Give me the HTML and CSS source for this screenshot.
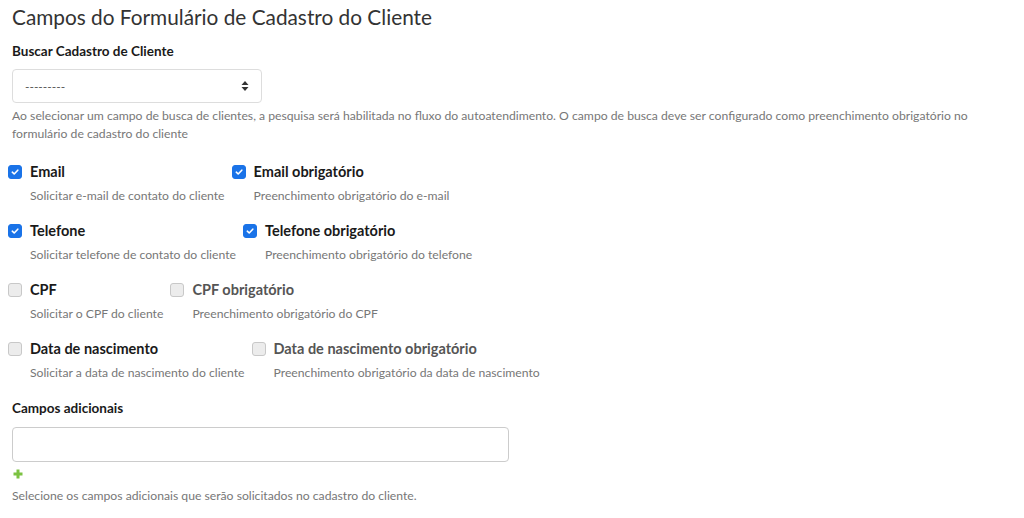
FILE: index.html
```html
<!DOCTYPE html>
<html lang="pt-BR">
<head>
<meta charset="utf-8">
<title>Campos do Formulário de Cadastro do Cliente</title>
<link rel="stylesheet" href="styles.css">
</head>
<body>
<main class="page">
  <h1 class="title">Campos do Formulário de Cadastro do Cliente</h1>

  <section class="field">
    <label class="field-label">Buscar Cadastro de Cliente</label>
    <div class="select">
      <span class="select-value">---------</span>
      <svg class="select-arrows" width="8" height="12" viewBox="0 0 8 12"><path d="M4 1 L7.5 5 H0.5 Z M4 11 L7.5 7 H0.5 Z" fill="#333"/></svg>
    </div>
    <p class="help">Ao selecionar um campo de busca de clientes, a pesquisa será habilitada no fluxo do autoatendimento. O campo de busca deve ser configurado como preenchimento obrigatório no formulário de cadastro do cliente</p>
  </section>

  <div class="checks">
    <div class="check-row">
      <div class="check">
        <span class="box checked"><svg width="10" height="10" viewBox="0 0 10 10"><path d="M2.3 5.2 L4.2 7 L7.8 3.2" fill="none" stroke="#fff" stroke-width="1.6" stroke-linecap="round" stroke-linejoin="round"/></svg></span>
        <div class="check-text"><div class="check-label">Email</div><div class="check-desc">Solicitar e-mail de contato do cliente</div></div>
      </div>
      <div class="check">
        <span class="box checked"><svg width="10" height="10" viewBox="0 0 10 10"><path d="M2.3 5.2 L4.2 7 L7.8 3.2" fill="none" stroke="#fff" stroke-width="1.6" stroke-linecap="round" stroke-linejoin="round"/></svg></span>
        <div class="check-text"><div class="check-label">Email obrigatório</div><div class="check-desc">Preenchimento obrigatório do e-mail</div></div>
      </div>
    </div>
    <div class="check-row">
      <div class="check">
        <span class="box checked"><svg width="10" height="10" viewBox="0 0 10 10"><path d="M2.3 5.2 L4.2 7 L7.8 3.2" fill="none" stroke="#fff" stroke-width="1.6" stroke-linecap="round" stroke-linejoin="round"/></svg></span>
        <div class="check-text"><div class="check-label">Telefone</div><div class="check-desc">Solicitar telefone de contato do cliente</div></div>
      </div>
      <div class="check">
        <span class="box checked"><svg width="10" height="10" viewBox="0 0 10 10"><path d="M2.3 5.2 L4.2 7 L7.8 3.2" fill="none" stroke="#fff" stroke-width="1.6" stroke-linecap="round" stroke-linejoin="round"/></svg></span>
        <div class="check-text"><div class="check-label">Telefone obrigatório</div><div class="check-desc">Preenchimento obrigatório do telefone</div></div>
      </div>
    </div>
    <div class="check-row">
      <div class="check">
        <span class="box"></span>
        <div class="check-text"><div class="check-label">CPF</div><div class="check-desc">Solicitar o CPF do cliente</div></div>
      </div>
      <div class="check">
        <span class="box"></span>
        <div class="check-text"><div class="check-label muted">CPF obrigatório</div><div class="check-desc">Preenchimento obrigatório do CPF</div></div>
      </div>
    </div>
    <div class="check-row">
      <div class="check">
        <span class="box"></span>
        <div class="check-text"><div class="check-label">Data de nascimento</div><div class="check-desc">Solicitar a data de nascimento do cliente</div></div>
      </div>
      <div class="check">
        <span class="box"></span>
        <div class="check-text"><div class="check-label muted">Data de nascimento obrigatório</div><div class="check-desc">Preenchimento obrigatório da data de nascimento</div></div>
      </div>
    </div>
  </div>

  <section class="field extra">
    <label class="field-label">Campos adicionais</label>
    <div class="input"></div>
    <svg class="plus" width="10" height="10" viewBox="0 0 10 10"><path d="M5 0.5 V9.5 M0.5 5 H9.5" stroke="#7cc242" stroke-width="3"/></svg>
    <p class="help">Selecione os campos adicionais que serão solicitados no cadastro do cliente.</p>
  </section>
</main>
</body>
</html>
```

FILE: styles.css
```css
* { box-sizing: border-box; }
body {
  margin: 0;
  background: #fff;
  font-family: Lato, "Open Sans", sans-serif;
  color: #333;
}
.page { padding: 4px 12px 0 12px; }
.title {
  margin: 0;
  font-size: 20.8px;
  font-weight: 400;
  line-height: 26px;
  color: #333;
}
.field { margin-top: 12px; }
.field-label {
  display: block;
  font-size: 13.5px;
  font-weight: 700;
  line-height: 18px;
  color: #1a1a1a;
}
.select {
  margin-top: 9px;
  width: 250px;
  height: 34px;
  border: 1px solid #ddd;
  border-radius: 4px;
  display: flex;
  align-items: center;
  justify-content: space-between;
  padding: 0 12px 0 12px;
  font-size: 12px;
  color: #555;
}
.help {
  margin: 4px 0 0 0;
  font-size: 12.2px;
  line-height: 18px;
  color: #777;
  max-width: 990px;
}
.checks { margin: 19px 0 0 -4px; }
.check-row { display: flex; gap: 7px; margin-bottom: 15px; }
.check { display: flex; gap: 8px; align-items: flex-start; }
.box {
  width: 14px;
  height: 14px;
  margin-top: 3px;
  border-radius: 3px;
  border: 1px solid #c8c8c8;
  background: #ececec;
  display: flex;
  align-items: center;
  justify-content: center;
}
.box.checked { background: #1a73e8; border-color: #1a73e8; }
.check-label {
  font-size: 14.5px;
  font-weight: 700;
  line-height: 20px;
  color: #1a1a1a;
}
.check-label.muted { color: #555; }
.check-desc {
  margin-top: 4px;
  font-size: 12.2px;
  line-height: 20px;
  color: #777;
}
.extra { margin-top: 16px; }
.input {
  margin-top: 10px;
  width: 497px;
  height: 35px;
  border: 1px solid #ccc;
  border-radius: 4px;
}
.plus { display: block; margin: 7px 0 0 1px; }
.extra .help { margin-top: 8px; }
```
